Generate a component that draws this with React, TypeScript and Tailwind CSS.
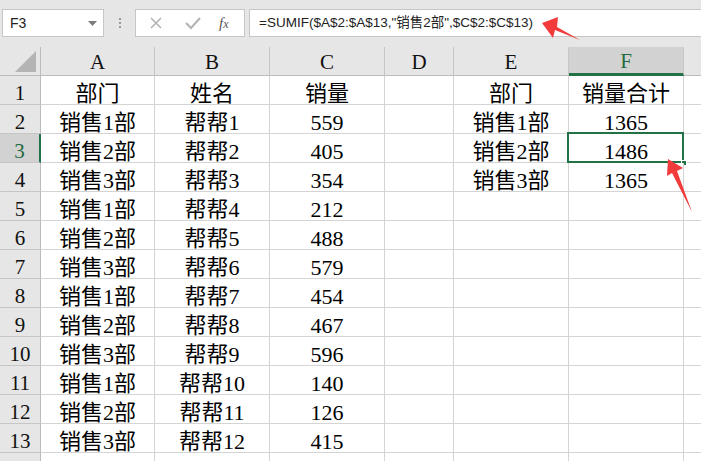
import React from "react";

const cols = [
  { key: "A", w: "w-[114px]" },
  { key: "B", w: "w-[115px]" },
  { key: "C", w: "w-[115px]" },
  { key: "D", w: "w-[69px]" },
  { key: "E", w: "w-[115px]" },
  { key: "F", w: "w-[115px]" },
];

const data: string[][] = [
  ["部门", "姓名", "销量", "", "部门", "销量合计"],
  ["销售1部", "帮帮1", "559", "", "销售1部", "1365"],
  ["销售2部", "帮帮2", "405", "", "销售2部", "1486"],
  ["销售3部", "帮帮3", "354", "", "销售3部", "1365"],
  ["销售1部", "帮帮4", "212", "", "", ""],
  ["销售2部", "帮帮5", "488", "", "", ""],
  ["销售3部", "帮帮6", "579", "", "", ""],
  ["销售1部", "帮帮7", "454", "", "", ""],
  ["销售2部", "帮帮8", "467", "", "", ""],
  ["销售3部", "帮帮9", "596", "", "", ""],
  ["销售1部", "帮帮10", "140", "", "", ""],
  ["销售2部", "帮帮11", "126", "", "", ""],
  ["销售3部", "帮帮12", "415", "", "", ""],
  ["", "", "", "", "", ""],
];

export default function App() {
  return (
    <div className="relative w-[701px] h-[461px] overflow-hidden bg-[#e6e6e6] font-['Liberation_Serif','Noto_Sans_CJK_SC',serif]">
      {/* formula bar */}
      <div className="h-[47px] flex items-start pt-[9px] pl-[2px] gap-0">
        <div className="w-[102px] h-[28px] bg-white border border-[#c6c6c6] flex items-center justify-between pl-[7px] pr-[6px]">
          <span className="text-[14px] text-[#222] font-['Liberation_Sans','Noto_Sans_CJK_SC',sans-serif]">F3</span>
          <svg width="9" height="5" viewBox="0 0 9 5"><path d="M0 0 L9 0 L4.5 5 Z" fill="#7a7a7a" /></svg>
        </div>
        <div className="w-[31px] h-[28px] flex flex-col items-center justify-center gap-[2px]">
          <div className="w-[2px] h-[2px] bg-[#9a9a9a]" />
          <div className="w-[2px] h-[2px] bg-[#9a9a9a]" />
          <div className="w-[2px] h-[2px] bg-[#9a9a9a]" />
        </div>
        <div className="w-[110px] h-[28px] bg-white border border-[#c6c6c6] flex items-center pl-[12px] gap-0">
          <svg width="14" height="14" viewBox="0 0 14 14" className="ml-[1px]">
            <path d="M2 2 L12 12 M12 2 L2 12" stroke="#b3b3b3" strokeWidth="1.6" />
          </svg>
          <svg width="18" height="14" viewBox="0 0 18 14" className="ml-[21px]">
            <path d="M2 7 L7 12 L16 2" stroke="#b3b3b3" strokeWidth="2" fill="none" />
          </svg>
          <span className="ml-[17px] text-[15px] italic text-[#555] font-['Liberation_Serif',serif] leading-none">
            f<span className="text-[12px]">x</span>
          </span>
        </div>
        <div className="ml-[4px] flex-1 h-[28px] bg-white border border-[#c6c6c6] border-r-0 flex items-center pl-[9px]">
          <span className="text-[13.5px] text-[#222] font-['Liberation_Sans','Noto_Sans_CJK_SC',sans-serif] whitespace-nowrap">
            =SUMIF($A$2:$A$13,"销售2部",$C$2:$C$13)
          </span>
        </div>
      </div>

      {/* sheet */}
      <div className="flex flex-col">
        {/* column header */}
        <div className="flex h-[29px]">
          <div className="w-[41px] h-[29px] border-r border-b border-[#bcbcbc] relative">
            <svg width="22" height="22" viewBox="0 0 22 22" className="absolute left-[15px] top-[4px]">
              <path d="M21 0 L21 21 L0 21 Z" fill="#b4b4b4" />
            </svg>
          </div>
          {cols.map((c) => (
            <div
              key={c.key}
              className={`${c.w} h-[29px] border-r border-[#c6c6c6] flex items-center justify-center pt-[3px] text-[21px] ${
                c.key === "F"
                  ? "bg-[#d2d2d2] text-[#1f6b3f] border-b-[3px] border-b-[#217346]"
                  : "text-[#111] border-b border-b-[#bcbcbc]"
              }`}
            >
              {c.key}
            </div>
          ))}
          <div className="flex-1 h-[29px] border-b border-[#bcbcbc]" />
        </div>
        {data.map((row, i) => (
          <div key={i} className="flex h-[29px]">
            <div
              className={`w-[41px] h-[29px] border-b border-[#c6c6c6] flex items-center justify-center pt-[7px] text-[21px] ${
                i === 2
                  ? "bg-[#d2d2d2] text-[#1f6b3f] border-r-2 border-r-[#217346]"
                  : "text-[#111] border-r border-r-[#bcbcbc]"
              }`}
            >
              {i < 13 ? i + 1 : ""}
            </div>
            {cols.map((c, j) => (
              <div
                key={c.key}
                className={`${c.w} h-[29px] relative bg-white border-r border-b border-[#d4d4d4] flex items-center justify-center pt-[6px] text-[22px] text-black whitespace-nowrap`}
              >
                {row[j]}
                {i === 2 && c.key === "F" && (
                  <>
                    <div className="absolute left-[-2px] top-[-2px] right-[-1px] bottom-[-1px] border-2 border-[#217346]" />
                    <div className="absolute right-[-4px] bottom-[-4px] w-[6px] h-[6px] bg-[#217346] border border-white" />
                  </>
                )}
              </div>
            ))}
            <div className="flex-1 h-[29px] bg-white border-b border-[#d4d4d4]" />
          </div>
        ))}
      </div>

      {/* annotation arrows */}
      <svg className="absolute left-0 top-0 pointer-events-none" width="701" height="461" viewBox="0 0 701 461">
        <path d="M542 23 L558 17 L557 27 L580 40 L555 30 L553 38 Z" fill="#f23b3b" />
        <path d="M668 159 L683 168 L677 171 L692 212 L672 173 L667 176 Z" fill="#f23b3b" />
      </svg>
    </div>
  );
}
